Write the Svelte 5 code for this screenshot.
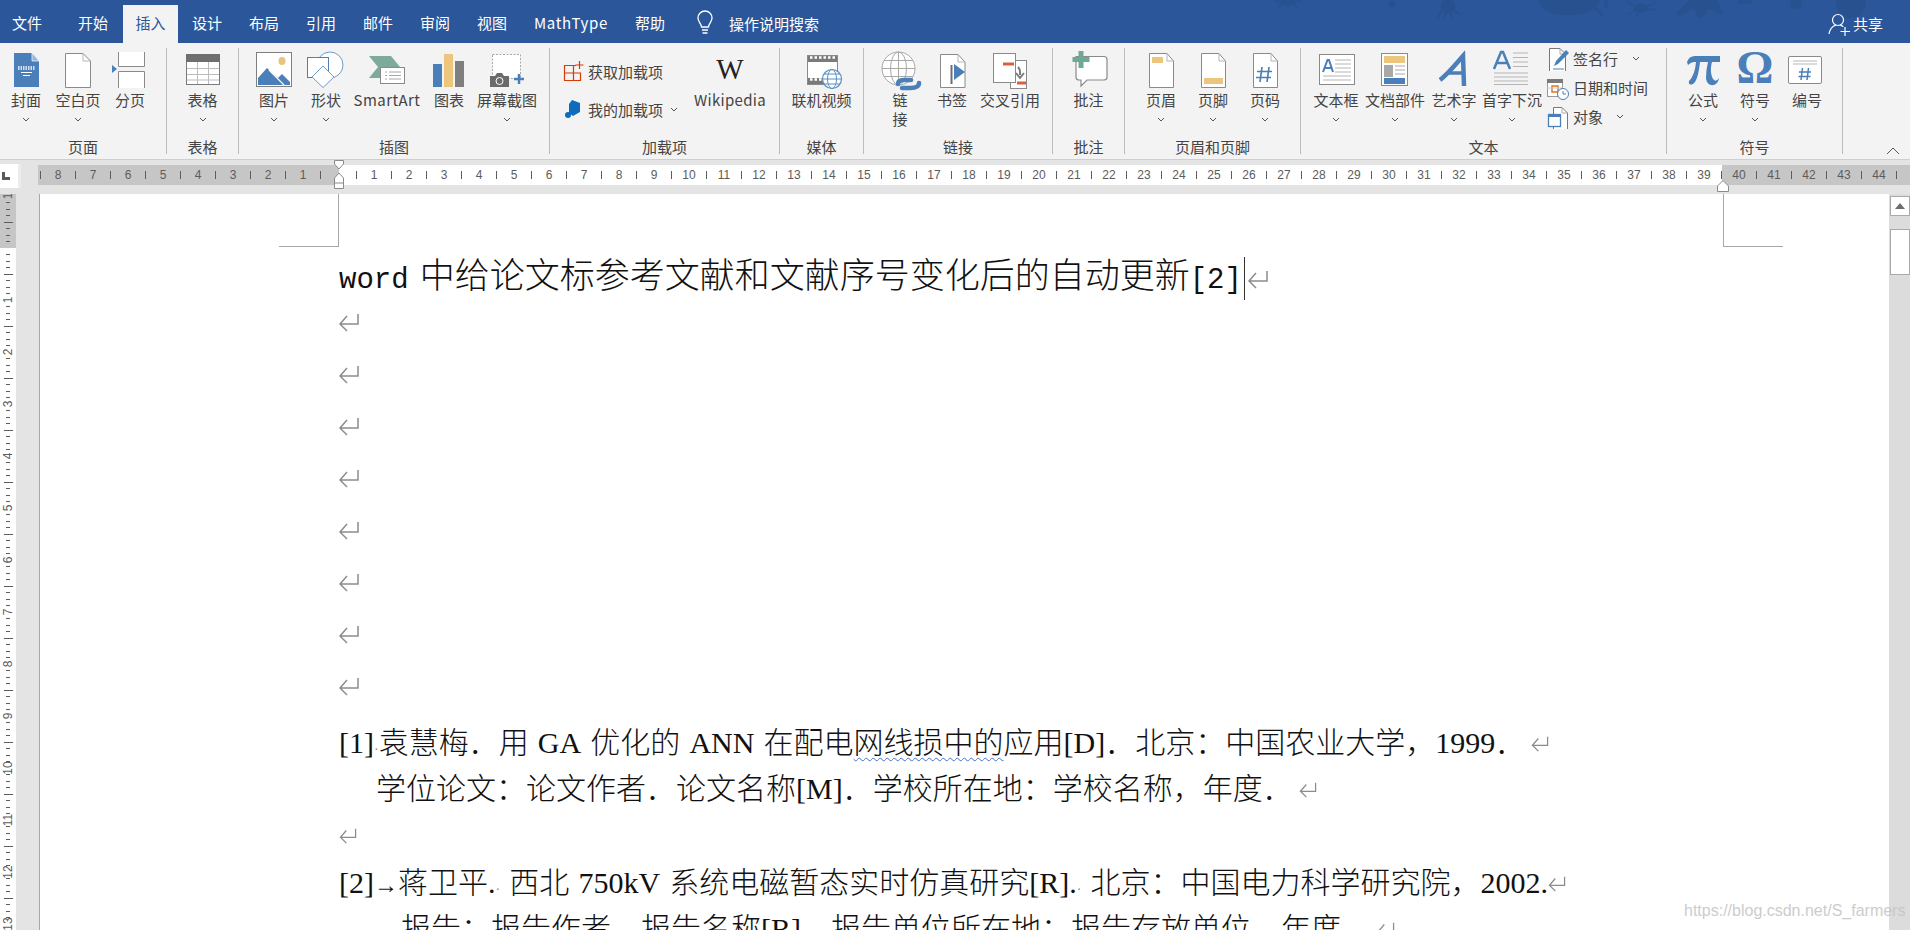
<script>
  const tabs = [
    { t: '文件', w: 54 }, { t: '开始', w: 69, pl: 9 }, { t: '插入', w: 55, active: true }, { t: '设计', w: 58 },
    { t: '布局', w: 56 }, { t: '引用', w: 58 }, { t: '邮件', w: 56 }, { t: '审阅', w: 58 },
    { t: '视图', w: 56 }, { t: 'MathType', w: 102, ls: 0.7 }, { t: '帮助', w: 56 }
  ];
  const groups = [
    { label: '页面', w: 167, pad: 0, items: [
      { l: '封面', w: 52, i: 'cover', c: 1 }, { l: '空白页', w: 52, i: 'blank', c: 1 }, { l: '分页', w: 52, i: 'brk' } ] },
    { label: '表格', w: 72, pad: 0, items: [ { l: '表格', w: 71, i: 'table', c: 1 } ] },
    { label: '插图', w: 311, pad: 9, items: [
      { l: '图片', w: 52, i: 'pic', c: 1 }, { l: '形状', w: 52, i: 'shape', c: 1 }, { l: 'SmartArt', w: 70, i: 'smart', ls: 0.45 },
      { l: '图表', w: 54, i: 'chart' }, { l: '屏幕截图', w: 62, i: 'shot', c: 1 } ] },
    { label: '加载项', w: 230, pad: 11, small: [
      { l: '获取加载项', i: 'get' }, { l: '我的加载项', i: 'mine', c: 1 } ], smallW: 134, items: [ { l: 'Wikipedia', w: 70, i: 'wiki', ls: 0.3 } ] },
    { label: '媒体', w: 84, pad: 0, items: [ { l: '联机视频', w: 83, i: 'video' } ] },
    { label: '链接', w: 189, pad: 10, items: [
      { l: '链', l2: '接', w: 52, i: 'link' }, { l: '书签', w: 52, i: 'mark' }, { l: '交叉引用', w: 64, i: 'cross' } ] },
    { label: '批注', w: 72, pad: 0, items: [ { l: '批注', w: 71, i: 'note' } ] },
    { label: '页眉和页脚', w: 176, pad: 10, items: [
      { l: '页眉', w: 52, i: 'head', c: 1 }, { l: '页脚', w: 52, i: 'foot', c: 1 }, { l: '页码', w: 52, i: 'num', c: 1 } ] },
    { label: '文本', w: 366, pad: 6, items: [
      { l: '文本框', w: 58, i: 'box', c: 1 }, { l: '文档部件', w: 60, i: 'parts', c: 1 }, { l: '艺术字', w: 58, i: 'art', c: 1 }, { l: '首字下沉', w: 58, i: 'drop', c: 1 } ],
      after: [ { l: '签名行', i: 'sign', gap: 4 }, { l: '日期和时间', i: 'date' }, { l: '对象', i: 'obj', gap: 3 } ] },
    { label: '符号', w: 176, pad: 10, items: [
      { l: '公式', w: 52, i: 'pi', c: 1 }, { l: '符号', w: 52, i: 'omega', c: 1 }, { l: '编号', w: 52, i: 'numbering' } ] }
  ];
  const left = [8, 7, 6, 5, 4, 3, 2, 1];
  const mid = Array.from({ length: 39 }, (_, i) => i + 1);
  const right = [40, 41, 42, 43, 44];
  const vTicks = (count) => Array.from({ length: count }, (_, i) => {
    const k = i + 1;
    return { k, n: k % 8 === 0 ? k / 8 : 0, long: k % 4 === 0 };
  });
  const vTop = vTicks(9);
  const vBottom = vTicks(106);
  const empties = Array.from({ length: 8 }, (_, i) => i);
</script>

{#snippet chev()}
  <svg class="chev" width="8" height="5" viewBox="0 0 8 5"><path d="M1 1l3 3 3-3" fill="none" stroke="#555" stroke-width="1"/></svg>
{/snippet}

{#snippet ret(cls)}
  <svg class={cls} viewBox="0 0 20 19"><path d="M19 1V11H1M8 3L1 11L8 18" fill="none" stroke="#8c8c8c" stroke-width="1.500"/></svg>
{/snippet}

{#snippet tick(t)}
  <div class="vt">
    {#if t.n}<span class="vn">{t.n}</span>{:else}<i class:long={t.long}></i>{/if}
  </div>
{/snippet}

{#snippet icon(n)}
  <svg class="ic" width="40" height="38" viewBox="0 0 40 38">
    {#if n === 'cover'}
      <path d="M8 2H26L33 10V36H8Z" fill="#4a7fb9"/><path d="M26 2L33 10H26Z" fill="#8fb3d9" stroke="#fff" stroke-width=".7"/>
      <path d="M12 16H29M12 18H29" stroke="#fff" stroke-width="1.400" stroke-dasharray="1.500 1"/><path d="M15 21.500H26M17 24.500H24" stroke="#fff"/>
    {:else if n === 'blank'}
      <path d="M7.500 2.500H25L32.500 10V36.500H7.500Z" fill="#fff" stroke="#8a8a8a"/><path d="M25 2.500V10H32.500" fill="none" stroke="#b5b5b5"/>
    {:else if n === 'brk'}
      <path d="M8.500 1V15.500H34.500V1" fill="#fff" stroke="#8a8a8a"/><path d="M8.500 37V20.500H34.500V37" fill="#fff" stroke="#8a8a8a"/><path d="M2 14L7 18L2 22Z" fill="#4a7fb9"/>
    {:else if n === 'table'}
      <rect x="3.500" y="3.500" width="33" height="30" fill="#fff" stroke="#7a7a7a"/><rect x="3" y="3" width="34" height="8" fill="#6e6e6e"/>
      <path d="M14.500 11V33M25.500 11V33M4 17.500H36M4 23.500H36M4 29H36" stroke="#bdbdbd"/>
    {:else if n === 'pic'}
      <rect x="2.500" y="1.500" width="35" height="34" fill="#fff" stroke="#7f7f7f"/><ellipse cx="28" cy="10" rx="3.500" ry="4" fill="#e9c37c"/>
      <path d="M4 34V27L13 17L24 27L28 23L36 31V34Z" fill="#4a7fb9"/><path d="M15 19L30 34" stroke="#fff" stroke-width="1.300"/>
    {:else if n === 'shape'}
      <circle cx="24" cy="14" r="13" fill="#fff" stroke="#6f9bc9"/><rect x="1.500" y="6.500" width="21" height="20" fill="#fff" stroke="#4a7fb9"/>
      <path d="M17 15L28 26L17 36.500L6 26Z" fill="#fff" stroke="#6f9bc9"/>
    {:else if n === 'smart'}
      <path d="M2 5H24L33 16L24 27H2L11 16Z" fill="#7daa99"/><rect x="13.500" y="16.500" width="24" height="16" fill="#fff" stroke="#8a8a8a"/>
      <path d="M18 21H20M22 21H34M18 24.500H20M22 24.500H34M18 28H20M22 28H34" stroke="#a8a8a8"/>
    {:else if n === 'chart'}
      <rect x="4" y="13" width="9" height="23" fill="#4a7fb9"/><rect x="15" y="3" width="9" height="33" fill="#ecc67f"/><rect x="26" y="10" width="9" height="26" fill="#7f7f7f"/>
    {:else if n === 'shot'}
      <rect x="5.500" y="3.500" width="28" height="24" fill="#fff" stroke="#a8a8a8" stroke-dasharray="2 1.500"/>
      <path d="M3 25H8L10 22H15L17 25H22V36H3Z" fill="#6b6b6b"/><circle cx="12.500" cy="30" r="3.500" fill="#6b6b6b" stroke="#fff"/>
      <path d="M32 23V33M27 28H37" stroke="#4a7fb9" stroke-width="2.500"/>
    {:else if n === 'wiki'}
      <text x="20" y="28" text-anchor="middle" class="w">W</text>
    {:else if n === 'video'}
      <rect x="5.500" y="4.500" width="30" height="29" fill="#fff" stroke="#8a8a8a"/><path d="M6 5H35V11H6ZM6 27H28V33H6Z" fill="#7a7a7a"/>
      <path d="M8 6.500H33M8 28.500H26" stroke="#fff" stroke-width="2.500" stroke-dasharray="2.500 2"/>
      <circle cx="30" cy="28" r="9.500" fill="#fff" stroke="#5a8fc4" stroke-width="1.200"/><ellipse cx="30" cy="28" rx="4.500" ry="9.500" fill="none" stroke="#5a8fc4"/><path d="M20.500 28H39.500M22 23H38M22 33H38" stroke="#5a8fc4"/>
    {:else if n === 'link'}
      <circle cx="18.500" cy="17.500" r="16.500" fill="#fff" stroke="#a8a8a8"/><ellipse cx="18.500" cy="17.500" rx="8" ry="16.500" fill="none" stroke="#a8a8a8"/><path d="M2 17.500H35M4 9.500H33M4 25.500H33M18.500 1V34" stroke="#a8a8a8"/>
      <path d="M18 33C18 30 20 29 24 29H31M22 37H31C36 37 39 35 39 32" fill="none" stroke="#4a7fb9" stroke-width="4.500" stroke-linecap="round"/>
    {:else if n === 'mark'}
      <path d="M8.500 3.500H26L33 11V36.500H8.500Z" fill="#fff" stroke="#8a8a8a"/><path d="M26 3.500V11H33" fill="none" stroke="#b5b5b5"/>
      <path d="M19.500 14V33" stroke="#6e6e6e" stroke-width="2"/><path d="M22 13L33 21L22 29Z" fill="#4a7fb9"/>
    {:else if n === 'cross'}
      <rect x="20.500" y="9.500" width="16" height="28" fill="#fff" stroke="#8a8a8a"/><rect x="3.500" y="2.500" width="22" height="29" fill="#fff" stroke="#8a8a8a"/>
      <path d="M13 13H24" stroke="#d9603f" stroke-width="3"/><path d="M27 32H36" stroke="#d9603f" stroke-width="3"/>
      <path d="M28 16C31 19 30 21 30 24M26 22L30 27L34 22" fill="none" stroke="#7a7a7a" stroke-width="2"/>
    {:else if n === 'note'}
      <path d="M7 5.500H35Q38 5.500 38 8.500V26Q38 29 35 29H18L12 35V29H10Q7 29 7 26Z" fill="#fff" stroke="#8a8a8a" stroke-width="1.200"/>
      <path d="M12 0V17M3.500 8.500H20.500" stroke="#6fa896" stroke-width="5"/>
    {:else if n === 'head'}
      <path d="M8.500 2.500H26L32.500 10V36.500H8.500Z" fill="#fff" stroke="#8a8a8a"/><path d="M26 2.500V10H32.500" fill="none" stroke="#b5b5b5"/><rect x="11" y="6" width="11" height="6" fill="#ecc67f"/>
    {:else if n === 'foot'}
      <path d="M8.500 2.500H26L32.500 10V36.500H8.500Z" fill="#fff" stroke="#8a8a8a"/><path d="M26 2.500V10H32.500" fill="none" stroke="#b5b5b5"/><rect x="11" y="27" width="19" height="6" fill="#ecc67f"/>
    {:else if n === 'num'}
      <path d="M8.500 2.500H26L32.500 10V36.500H8.500Z" fill="#fff" stroke="#8a8a8a"/><path d="M26 2.500V10H32.500" fill="none" stroke="#b5b5b5"/>
      <path d="M17 16L15 31M24 16L22 31M12 20.500H27M11 26.500H26" stroke="#4a7fb9" stroke-width="1.700"/>
    {:else if n === 'box'}
      <rect x="3.500" y="3.500" width="35" height="30" fill="#fff" stroke="#8a8a8a"/><path d="M7 21L11.500 9H13L17 21M9 17H15" fill="none" stroke="#4a7fb9" stroke-width="2"/>
      <path d="M19 9H35M19 13H35M19 17H35M19 21H35M7 25H35M7 29H35" stroke="#b5b5b5"/>
    {:else if n === 'parts'}
      <rect x="6.500" y="2.500" width="26" height="32" fill="#fff" stroke="#8a8a8a"/><rect x="9" y="5" width="21" height="7" fill="#ecc67f"/><rect x="9" y="14" width="9" height="12" fill="#a8a8a8"/>
      <path d="M20 15H30M20 19H30M20 23H30" stroke="#a8a8a8"/><rect x="9" y="27" width="21" height="6" fill="#4a7fb9"/>
    {:else if n === 'art'}
      <path d="M6 29C14 23 22 13 29 5L30 35" fill="none" stroke="#4a7fb9" stroke-width="4.500"/><path d="M14 22H30" stroke="#4a7fb9" stroke-width="3.500"/>
    {:else if n === 'drop'}
      <path d="M2 18L9 1H11L18 18M5 12H15" fill="none" stroke="#4a7fb9" stroke-width="2.500"/>
      <path d="M21 2H36M21 6.500H36M21 11H36M21 15.500H36M2 22H36M2 26H36M2 30H36M2 33.500H36" stroke="#b5b5b5"/>
    {:else if n === 'pi'}
      <path d="M4 11Q6 5 12 5H37V11H29C27 18 28 24 30 28Q33 32 36 27C35 36 24 37 23 27Q23 19 25 11H17C16 20 14 31 10 33Q5 35 6 30Q12 24 13 11H11Q8 11 5 14Z" fill="#4a7fb9"/>
    {:else if n === 'omega'}
      <text x="20" y="32" text-anchor="middle" class="om">Ω</text>
    {:else if n === 'numbering'}
      <rect x="1.500" y="5.500" width="33" height="27" rx="1.500" fill="#fff" stroke="#8a8a8a"/><path d="M6 10H30M6 13H30" stroke="#b5b5b5"/>
      <path d="M15.500 17L14 29M21.500 17L20 29M12 21H24M11.500 25.500H23.500" stroke="#4a7fb9" stroke-width="1.500"/>
    {/if}
  </svg>
{/snippet}

{#snippet sm(n)}
  <svg class="sm" width="24" height="24" viewBox="0 0 24 24">
    {#if n === 'get'}
      <path d="M3.500 6.500H12.500V21.500H3.500ZM3.500 14H19.500V21.500H12.500M12.500 6.500H15" fill="none" stroke="#d83b01" stroke-width="1.200"/><path d="M18.500 2V10M14.500 6H22.500" stroke="#d83b01" stroke-width="1.200"/>
    {:else if n === 'mine'}
      <path d="M11 3L19 6V15L12 19L8 16V7Z" fill="#0f6cbd"/><circle cx="7" cy="18" r="3" fill="#0f6cbd"/>
    {:else if n === 'sign'}
      <path d="M3.500 1.500H14L19.500 7V24.500H3.500Z" fill="#fff" stroke="#777"/><path d="M14 1.500V7H19.500" fill="none" stroke="#aaa"/><path d="M7 22H18" stroke="#4a7fb9"/><path d="M8 19L10 14L20 3L23 6L12 17Z" fill="#4a7fb9"/>
    {:else if n === 'date'}
      <rect x="1.500" y="3.500" width="15" height="17" fill="#fff" stroke="#999"/><rect x="1" y="3" width="16" height="4" fill="#7a7a7a"/><rect x="6" y="10" width="6" height="6" fill="#fff" stroke="#d8792a" stroke-width="1.500"/><path d="M1 12H17" stroke="#ccc"/>
      <circle cx="17" cy="18" r="5.500" fill="#fff" stroke="#4a7fb9"/><path d="M17 15V18H20" fill="none" stroke="#4a7fb9"/>
    {:else if n === 'obj'}
      <path d="M7.500 2.500H16L21.500 8V25.500H7.500Z" fill="#fff" stroke="#777"/><path d="M16 2.500V8H21.500" fill="none" stroke="#aaa"/><rect x="2.500" y="9.500" width="12" height="12" fill="#fff" stroke="#4a7fb9" stroke-width="1.300"/><path d="M2 11H15" stroke="#4a7fb9" stroke-width="2"/>
    {/if}
  </svg>
{/snippet}

{#snippet bigBtn(it)}
  <div class="btn" style:width="{it.w}px">
    <div class="ic-wrap">{@render icon(it.i)}</div>
    <span class="lab" style:letter-spacing={it.ls ? `${it.ls}px` : null}>{it.l}</span>
    {#if it.l2}<span class="lab">{it.l2}</span>{/if}
    {#if it.c}{@render chev()}{/if}
  </div>
{/snippet}

<div class="app">
  <header class="title">
    <nav class="tabs">
      {#each tabs as t}
        <span class="tab" class:active={t.active} style:width="{t.w}px" style:padding-left={t.pl ? `${t.pl}px` : null} style:letter-spacing={t.ls ? `${t.ls}px` : null}>{t.t}</span>
      {/each}
      <span class="tell">
        <svg width="20" height="26" viewBox="0 0 20 26"><path d="M6.500 17C6 13 3 12 3 8A7 7 0 0 1 17 8C17 12 14 13 13.500 17ZM7 20H13M7.500 23H12.500" fill="none" stroke="#fff" stroke-width="1.300"/></svg>
        <span>操作说明搜索</span>
      </span>
    </nav>
    <svg class="deco" width="640" height="43" viewBox="0 0 640 43">
      <g fill="#28518f" stroke="none">
        <ellipse cx="18" cy="1" rx="7" ry="5"/><path d="M5 0L12 3M31 0L24 3M8 7L13 4M28 8L23 4" stroke="#28518f" stroke-width="1.500"/>
        <circle cx="122" cy="3.500" r="3.500"/>
        <circle cx="178" cy="6" r="7.500"/><path d="M172 10L168 18M176 11L174 18M180 11L182 18M184 10L190 15" stroke="#28518f" stroke-width="2"/>
        <path d="M268 0H330Q326 15 298 15Q272 15 268 0Z"/><path d="M322 4L332 15M336 0V8" stroke="#28518f" stroke-width="3"/>
        <ellipse cx="371" cy="8" rx="7" ry="4.500"/><path d="M357 1L364 6M385 3L378 6M358 15L365 10M386 9L377 10M366 17L369 11" stroke="#28518f" stroke-width="1.500"/>
        <path d="M418 0H448C448 6 454 10 452 14C448 16 444 10 438 9C436 12 434 18 428 18C424 16 428 11 424 9C418 10 412 18 407 15C405 10 416 6 418 0Z"/>
        <path d="M467 0H483L481 4H470Z"/>
        <ellipse cx="526" cy="3" rx="6" ry="6"/>
        <path d="M566 0H596C596 12 590 18 581 18C572 18 566 12 566 0Z"/>
      </g>
    </svg>
    <span class="share">
      <svg width="24" height="24" viewBox="0 0 24 24"><circle cx="10" cy="8" r="5.500" fill="none" stroke="#fff" stroke-width="1.200"/><path d="M1 22C2 16 5 14 8 13M12 13C14 14 15 14 15 15M17 15V24M12.500 19.500H22" fill="none" stroke="#fff" stroke-width="1.200"/></svg>
      <span>共享</span>
    </span>
  </header>

  <section class="ribbon">
    {#each groups as g}
      <div class="group" style:width="{g.w}px">
        <div class="items" style:padding-left="{g.pad}px">
          {#if g.small}
            <div class="smalls" style:width="{g.smallW}px">
              {#each g.small as s}
                <div class="smallrow">
                  {@render sm(s.i)}
                  <span class="sl">{s.l}</span>
                  {#if s.c}{@render chev()}{/if}
                </div>
              {/each}
            </div>
          {/if}
          {#each g.items as it}
            {@render bigBtn(it)}
          {/each}
          {#if g.after}
            <div class="smalls tight">
              {#each g.after as s}
                <div class="smallrow">
                  {@render sm(s.i)}
                  <span class="sl">{s.l}</span>
                  {#if s.gap}<span class="cgap" style:width="{s.gap}px"></span>{@render chev()}{/if}
                </div>
              {/each}
            </div>
          {/if}
        </div>
        <div class="glabel">{g.label}</div>
      </div>
    {/each}
    <svg class="collapse" width="14" height="8" viewBox="0 0 14 8"><path d="M1 7L7 1L13 7" fill="none" stroke="#555"/></svg>
  </section>

  <section class="hband">
    <div class="corner"><span class="lmark"></span></div>
    <div class="hruler">
      <div class="seg grey seg-left">
        {#each left as n}<i></i><b>{n}</b>{/each}<i></i>
      </div>
      <div class="seg white seg-mid">
        {#each mid as n}<i></i><b>{n}</b>{/each}<i></i>
      </div>
      <div class="seg grey seg-right">
        {#each right as n}<b>{n}</b><i></i>{/each}
      </div>
      <svg class="indent" width="16" height="32" viewBox="0 0 16 32"><path d="M3.500 .5H12.500V4L8 9L3.500 4Z" fill="#fff" stroke="#8a8a8a"/><path d="M8 13L12.500 18V28.500H3.500V18Z" fill="#fff" stroke="#8a8a8a"/><path d="M3.500 23H12.500" stroke="#8a8a8a"/></svg>
      <svg class="indent-r" width="14" height="12" viewBox="0 0 14 12"><path d="M7 .5L12.500 6V11.500H1.500V6Z" fill="#fff" stroke="#8a8a8a"/></svg>
    </div>
  </section>

  <main class="work">
    <aside class="vruler">
      <div class="vgrey">
        {#each vTop as t}{@render tick(t)}{/each}
      </div>
      <div class="vwhite">
        {#each vBottom as t}{@render tick(t)}{/each}
      </div>
    </aside>
    <div class="gutter"></div>
    <article class="page">
      <span class="crop crop-l"></span>
      <span class="crop crop-r"></span>
      <div class="body">
        <div class="h1"><span class="mono">word</span><span class="sp"></span>中给论文标参考文献和文献序号变化后的自动更新<span class="mono">[2]</span><span class="caret"></span>{@render ret('rt')}</div>
        {#each empties as e}
          <div class="empty">{@render ret('rt')}</div>
        {/each}
        <div class="ln first"><span class="r">[1]</span><span class="dot">·</span>袁慧梅．用 <span class="r">GA</span> 优化的 <span class="r">ANN</span> 在配电<span class="wavy">网线损中的</span>应用<span class="r">[D]</span>．北京：中国农业大学，<span class="r">1999</span>．{@render ret('rs')}</div>
        <div class="ln ind1">学位论文：论文作者．论文名称<span class="r">[M]</span>．学校所在地：学校名称，年度．{@render ret('rs')}</div>
        <div class="ln">{@render ret('rs')}</div>
        <div class="ln gap"><span class="r">[2]</span><span class="arrow">→</span>蒋卫平<span class="r">.</span><span class="dot">·</span> 西北 <span class="r">750kV</span> 系统电磁暂态实时仿真研究<span class="r">[R].</span><span class="dot">·</span> 北京：中国电力科学研究院，<span class="r">2002.</span>{@render ret('rs tightret')}</div>
        <div class="ln ind2">报告：报告作者．报告名称<span class="r">[R]</span>．报告单位所在地：报告存放单位，年度．{@render ret('rs')}</div>
      </div>
    </article>
    <aside class="vscroll">
      <div class="sbtn"><svg width="10" height="6" viewBox="0 0 10 6"><path d="M5 0L10 6H0Z" fill="#6e6e6e"/></svg></div>
      <div class="sthumb"></div>
    </aside>
    <span class="watermark">https://blog.csdn.net/S_farmers</span>
  </main>
</div>

<style>
  :global(body) { margin: 0; overflow: hidden; background: #e4e4e4; }
  .app {
    width: 1910px; height: 930px; overflow: hidden; display: flex; flex-direction: column;
    font-family: "Noto Sans CJK SC", "Noto Sans", sans-serif; font-size: 15px; color: #333;
  }
  .title { height: 43px; background: #2b579a; position: relative; flex: none; }
  .tabs { display: flex; height: 43px; padding-top: 5px; box-sizing: border-box; }
  .tab { color: #fff; text-align: center; line-height: 36px; box-sizing: border-box; height: 38px; flex: none; }
  .tab.active { background: #f3f3f3; color: #2b579a; }
  .tell { display: flex; align-items: center; color: #fff; margin-left: 17px; gap: 14px; height: 36px; }
  .tell svg { flex: none; }
  .deco { position: absolute; left: 1270px; top: 0; }
  .share { position: absolute; left: 1828px; top: 12px; display: flex; align-items: center; gap: 1px; color: #fff; line-height: 24px; }

  .ribbon {
    height: 117px; box-sizing: border-box; flex: none; background: #f3f3f3; border-bottom: 1px solid #cfcfcf;
    display: flex; padding-top: 5px; position: relative;
  }
  .group { height: 106px; box-sizing: border-box; border-right: 1px solid #bcbcbc; display: flex; flex-direction: column; position: relative; flex: none; }
  .items { display: flex; height: 89px; }
  .glabel { position: absolute; left: 0; right: 0; top: 89px; text-align: center; line-height: 20px; color: #444; }
  .btn { display: flex; flex-direction: column; align-items: center; flex: none; padding-top: 3px; box-sizing: border-box; }
  .ic-wrap { height: 38px; width: 40px; margin-bottom: 1px; }
  .ic { display: block; overflow: visible; }
  .lab { line-height: 19px; height: 19px; white-space: nowrap; color: #444; font-size: 15px; }
  .chev { display: block; flex: none; margin-top: 8px; }
  .smalls { display: flex; flex-direction: column; flex: none; }
  .smalls .smallrow { height: 38px; display: flex; align-items: center; gap: 3px; white-space: nowrap; }
  .smalls:not(.tight) { padding-top: 4px; }
  .smalls .chev { margin: 0 0 0 4px; }
  .smalls.tight { margin-left: 5px; margin-top: -4px; }
  .smalls.tight .smallrow { height: 29px; }
  .sl { color: #444; }
  .sm { flex: none; }
  .cgap { display: inline-block; flex: none; }
  .w { font-family: "Liberation Serif", serif; font-size: 29px; fill: #222; }
  .om { font-family: "Liberation Serif", serif; font-size: 46px; font-weight: 700; fill: #4a7fb9; }
  .collapse { position: absolute; left: 1886px; top: 104px; }

  .hband { height: 34px; flex: none; background: #e4e4e4; position: relative; display: flex; }
  .corner { width: 18px; height: 24px; margin-top: 4px; background: #fff; border-right: 3px solid #ececec; position: relative; }
  .lmark { position: absolute; left: 2px; top: 8px; width: 5px; height: 5px; border-left: 3px solid #5a5a5a; border-bottom: 3px solid #5a5a5a; }
  .hruler { position: absolute; left: 38px; right: 0; top: 5px; height: 20px; display: flex; background: #fff; }
  .seg { display: flex; height: 20px; align-items: center; color: #5c5c5c; font-size: 12px; font-family: "Liberation Sans", sans-serif; flex: none; box-sizing: border-box; }
  .seg.grey { background: #c6c6c6; }
  .seg.white { background: #fff; }
  .seg-left { width: 301px; padding-left: 2px; }
  .seg-mid { width: 1383px; padding-left: 17px; }
  .seg-right { flex: 1; }
  .seg i { width: 1px; height: 8px; background: #5c5c5c; flex: none; }
  .seg b { font-weight: 400; width: 34px; text-align: center; flex: none; }
  .indent { position: absolute; left: 293px; top: -5px; }
  .indent-r { position: absolute; left: 1678px; top: 15px; }

  .work { flex: 1; display: flex; position: relative; min-height: 0; }
  .vruler { width: 16px; flex: none; display: flex; flex-direction: column; background: #fff; color: #5c5c5c; overflow: hidden; }
  .vgrey { height: 54px; flex: none; background: #c6c6c6; display: flex; flex-direction: column-reverse; overflow: hidden; padding-bottom: 3.250px; box-sizing: border-box; }
  .vwhite { flex: 1; padding-top: 3.250px; min-height: 0; }
  .vt { height: 6.510px; flex: none; display: flex; align-items: center; justify-content: center; position: relative; }
  .vt i { display: block; width: 4px; height: 1px; background: #5c5c5c; }
  .vt i.long { width: 9px; }
  .vn { display: block; transform: rotate(-90deg); font-family: "Liberation Sans", sans-serif; font-size: 12px; line-height: 6px; white-space: nowrap; }
  .gutter { width: 23px; flex: none; background: #e4e4e4; border-right: 1px solid #a8a8a8; }
  .page { flex: 1; background: #fff; position: relative; overflow: hidden; min-width: 0; }
  .crop { position: absolute; top: 0; height: 53px; box-sizing: border-box; border-bottom: 1px solid #a8a8a8; }
  .crop-l { left: 239px; width: 60px; border-right: 1px solid #a8a8a8; }
  .crop-r { left: 1683px; width: 60px; border-left: 1px solid #a8a8a8; }
  .body { padding: 55px 0 0 299px; color: #111; }
  .h1 { height: 47px; line-height: 47px; font-size: 35px; white-space: nowrap; color: #111; font-weight: 300; }
  .mono { font-family: "Liberation Mono", monospace; font-size: 29px; }
  .sp { display: inline-block; width: 11px; }
  .caret { display: inline-block; width: 1px; height: 43px; background: #333; margin: 0 3px 0 2px; vertical-align: middle; }
  .empty { height: 52px; display: flex; align-items: center; }
  .rt { width: 20px; height: 19px; flex: none; vertical-align: -1px; }
  .rs { width: 18px; height: 16px; vertical-align: 1px; margin-left: 6px; }
  .tightret { margin-left: 0; }
  .ln { height: 46px; line-height: 46px; font-size: 30px; white-space: nowrap; font-weight: 300; word-spacing: 2.500px; }
  .ln .rs:first-child { margin-left: 0; }
  .first { margin-top: 5px; }
  .gap { margin-top: 2px; }
  .ind1 { padding-left: 37px; }
  .ind2 { padding-left: 62px; }
  .r { font-family: "Liberation Serif", serif; font-size: 30px; font-weight: 400; }
  .arrow { display: inline-block; width: 24px; text-align: center; font-family: "Liberation Sans", sans-serif; font-size: 24px; }
  .dot { color: #888; font-size: 14px; font-family: "Liberation Sans", sans-serif; }
  .wavy { text-decoration: underline wavy #4472c4 1px; text-underline-offset: 4px; }
  .vscroll { width: 21px; flex: none; background: #dcdcdc; position: relative; display: flex; flex-direction: column; align-items: center; padding-top: 2px; box-sizing: border-box; }
  .sbtn { width: 18px; height: 18px; background: #fff; border: 1px solid #aaa; display: flex; align-items: center; justify-content: center; flex: none; }
  .sthumb { width: 18px; height: 44px; background: #fff; border: 1px solid #aaa; margin-top: 13px; flex: none; }
  .watermark { position: absolute; left: 1684px; top: 707px; color: #c4c4c4; font-family: "Liberation Sans", sans-serif; font-size: 16px; line-height: 20px; opacity: .85; white-space: nowrap; }
</style>
